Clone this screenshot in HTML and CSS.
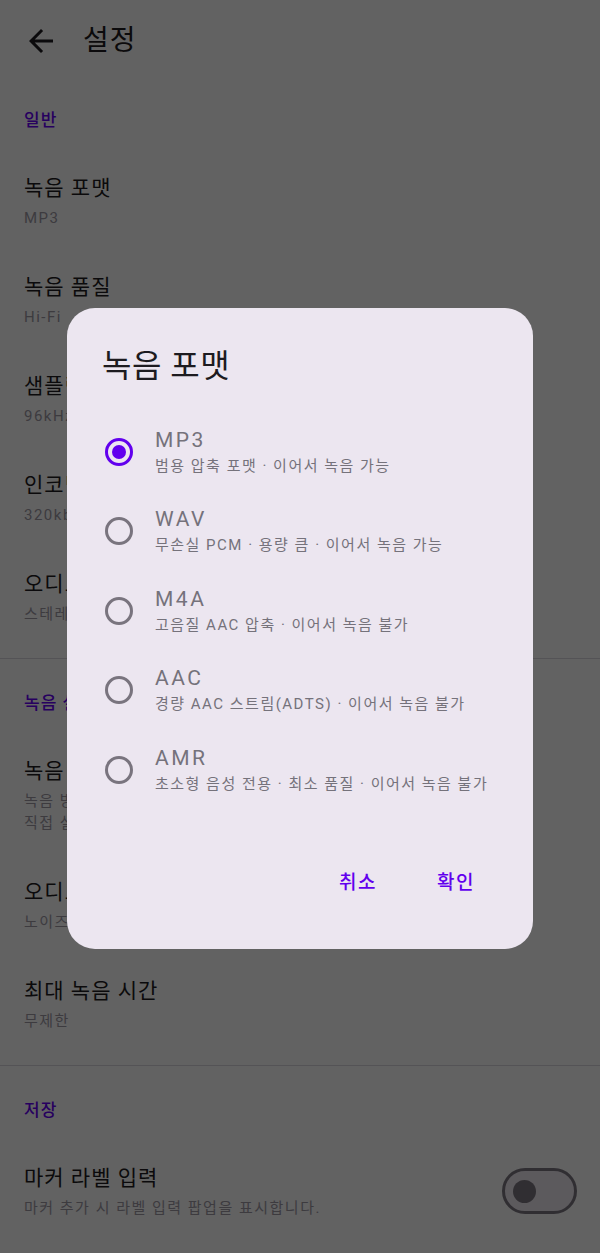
FILE: index.html
```html
<!DOCTYPE html>
<html lang="ko">
<head>
    <meta charset="UTF-8">
    <meta name="viewport" content="width=device-width, initial-scale=1.0">
    <title>설정</title>
    <link rel="stylesheet" href="styles.css">
</head>
<body>

    <div class="tela">
        <!-- Barra superior -->
        <header class="appbar">
            <button class="voltar" type="button">
                <svg viewBox="0 0 24 24"><path d="M20 11H7.83l5.59-5.59L12 4l-8 8 8 8 1.41-1.41L7.83 13H20v-2z"/></svg>
            </button>
            <h1>설정</h1>
        </header>

        <!-- 일반 -->
        <section>
            <h2 class="grupo">일반</h2>
            <div class="item"><div><p class="titulo">녹음 포맷</p><p class="sub">MP3</p></div></div>
            <div class="item"><div><p class="titulo">녹음 품질</p><p class="sub">Hi-Fi</p></div></div>
            <div class="item"><div><p class="titulo">샘플링 레이트</p><p class="sub">96kHz</p></div></div>
            <div class="item"><div><p class="titulo">인코딩 비트레이트</p><p class="sub">320kbps</p></div></div>
            <div class="item"><div><p class="titulo">오디오 채널</p><p class="sub">스테레오</p></div></div>
        </section>
        <hr class="divisor">

        <!-- 녹음 설정 -->
        <section>
            <h2 class="grupo">녹음 설정</h2>
            <div class="item"><div><p class="titulo">녹음 버튼 동작</p><p class="sub">녹음 방식을 선택합니다. 길게 누르면<br>직접 설정할 수 있습니다.</p></div></div>
            <div class="item"><div><p class="titulo">오디오 효과</p><p class="sub">노이즈 억제 · 자동 게인</p></div></div>
            <div class="item"><div><p class="titulo">최대 녹음 시간</p><p class="sub">무제한</p></div></div>
        </section>
        <hr class="divisor">

        <!-- 저장 -->
        <section>
            <h2 class="grupo">저장</h2>
            <div class="item">
                <div><p class="titulo">마커 라벨 입력</p><p class="sub">마커 추가 시 라벨 입력 팝업을 표시합니다.</p></div>
                <span class="switch"></span>
            </div>
        </section>
    </div>

    <div class="scrim"></div>

    <!-- Diálogo de formato -->
    <div class="dialogo">
        <h3>녹음 포맷</h3>
        <div class="opcoes">
            <div class="opcao"><span class="radio marcado"></span><div><p class="nome">MP3</p><p class="desc">범용 압축 포맷 · 이어서 녹음 가능</p></div></div>
            <div class="opcao"><span class="radio"></span><div><p class="nome">WAV</p><p class="desc">무손실 PCM · 용량 큼 · 이어서 녹음 가능</p></div></div>
            <div class="opcao"><span class="radio"></span><div><p class="nome">M4A</p><p class="desc">고음질 AAC 압축 · 이어서 녹음 불가</p></div></div>
            <div class="opcao"><span class="radio"></span><div><p class="nome">AAC</p><p class="desc">경량 AAC 스트림(ADTS) · 이어서 녹음 불가</p></div></div>
            <div class="opcao"><span class="radio"></span><div><p class="nome">AMR</p><p class="desc">초소형 음성 전용 · 최소 품질 · 이어서 녹음 불가</p></div></div>
        </div>
        <div class="acoes">
            <button class="botao" type="button">취소</button>
            <button class="botao" type="button">확인</button>
        </div>
    </div>

</body>
</html>
```

FILE: styles.css
```css
* { margin: 0; padding: 0; box-sizing: border-box; font-family: Roboto, "Noto Sans CJK KR", sans-serif; }
body { background: #f5f5f5; color: #1d1b20; }

.appbar { height: 82px; display: flex; align-items: center; padding-left: 23px; gap: 24px; }
.voltar { width: 36px; height: 36px; border: none; background: none; display: flex; }
.voltar svg { width: 36px; height: 36px; fill: #1d1b20; }
.appbar h1 { font-size: 28px; font-weight: 400; line-height: 1; letter-spacing: 1px; }

.grupo { padding: 26px 24px 20px; font-size: 17px; line-height: 24px; font-weight: 500; letter-spacing: 1px; color: #6200ee; }
.item { display: flex; justify-content: space-between; align-items: center; padding: 21px 24px 22px; }
.titulo { font-size: 21px; line-height: 30px; letter-spacing: 1px; color: #1d1b20; white-space: nowrap; }
.sub { margin-top: 4px; font-size: 15px; line-height: 22px; letter-spacing: 1.5px; color: #98949f; }
.divisor { border: none; height: 1px; background: #d2d0d6; margin: 11px 0 6px; }

.switch { position: relative; width: 75px; height: 46px; border: 3px solid #79747e; border-radius: 23px; background: #e6e0e9; margin-right: -1px; }
.switch::after { content: ""; position: absolute; left: 8px; top: 8.5px; width: 23px; height: 23px; border-radius: 50%; background: #79747e; }

.scrim { position: fixed; inset: 0; background: rgba(0, 0, 0, 0.6); }

.dialogo { position: fixed; left: 67px; top: 308px; width: 466px; height: 641px; background: #ece6f0; border-radius: 28px; padding: 40px 36px 45px 38px; display: flex; flex-direction: column; }
.dialogo h3 { margin-left: -3px; font-size: 32px; line-height: 36px; font-weight: 400; letter-spacing: 0.5px; color: #1d1b20; }
.opcoes { margin-top: 28px; }
.opcao { height: 79.5px; display: flex; align-items: center; gap: 22px; }
.radio { position: relative; flex: none; width: 28px; height: 28px; border: 3px solid #79747e; border-radius: 50%; }
.radio.marcado { border-color: #6200ee; }
.radio.marcado::after { content: ""; position: absolute; left: 4px; top: 4px; width: 14px; height: 14px; border-radius: 50%; background: #6200ee; }
.nome { font-size: 21px; line-height: 26px; letter-spacing: 2.5px; color: #75727b; }
.desc { margin-top: 2px; font-size: 15px; line-height: 22px; letter-spacing: 1.5px; color: #75727b; }

.acoes { margin-top: auto; display: flex; justify-content: flex-end; gap: 16px; }
.botao { height: 48px; padding: 0 22px; border: none; background: none; font-size: 19px; font-weight: 500; letter-spacing: 1.5px; color: #6200ee; cursor: pointer; }
```
